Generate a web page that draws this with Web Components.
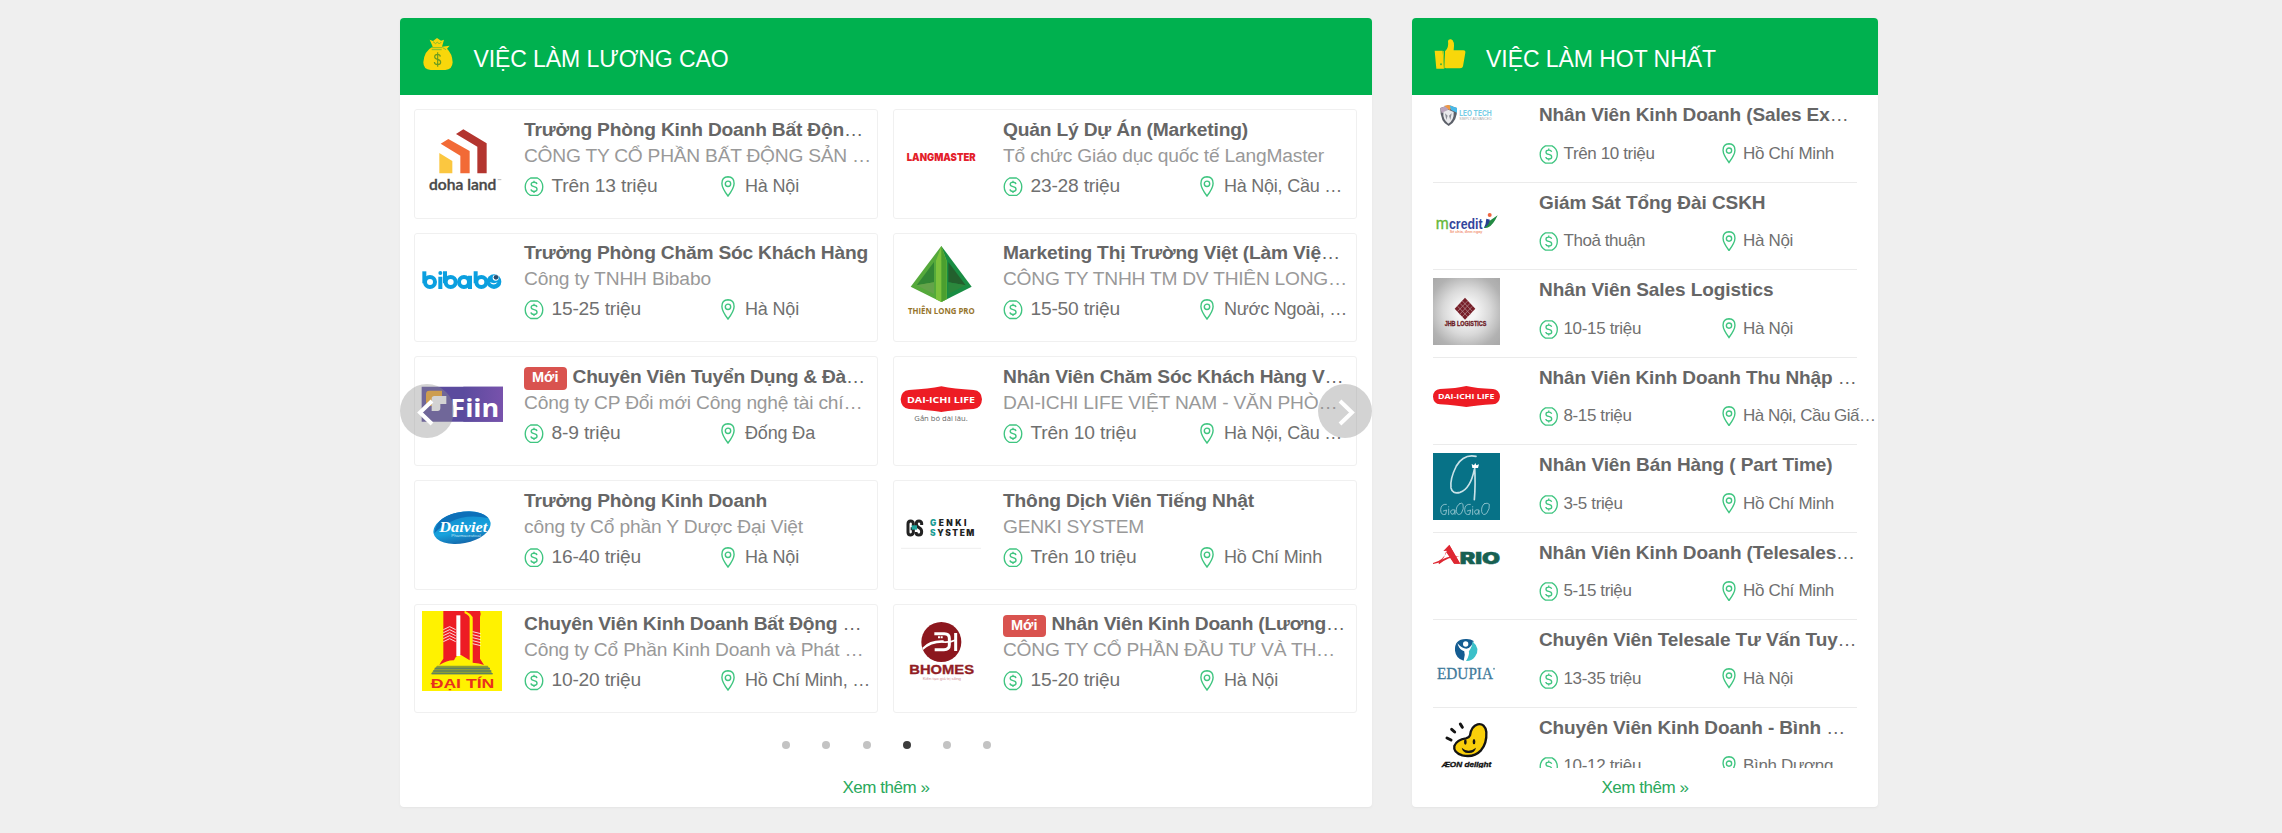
<!DOCTYPE html>
<html lang="vi">
<head>
<meta charset="utf-8">
<title>Việc làm</title>
<style>
html,body{margin:0;background:#efefef;font-family:"Liberation Sans",Arial,sans-serif}
</style>
</head>
<body>
<jobs-page></jobs-page>
<script>
const LOGOS = {
doha:['96 350 240 240','<path fill="#fbc740" d="M148 458l39 24v37h-39z"/><path fill="#f26a36" d="M152 430l23-14 64 36v67h-28v-53z"/><path fill="#b3352f" d="M198 401l22-14 70 42v90h-28v-80z"/><text x="117" y="569" font-family="Lato" font-weight="600" font-size="43" textLength="202" lengthAdjust="spacingAndGlyphs" fill="#484848" stroke="#484848">doha land</text><path d="M323 538h11" stroke="#bbb" stroke-width="3"/>'],
bibabo:['96 723 240 240','<g fill="none" stroke="#0b9fdf" stroke-width="12"><path d="M103 817v36"/><circle cx="120" cy="849" r="15"/><path d="M151 833v37M165 817v36"/><circle cx="182" cy="849" r="15"/><circle cx="222" cy="849" r="15"/><path d="M240 830v40M257 817v36"/><circle cx="274" cy="849" r="15"/></g><circle cx="151" cy="822" r="6" fill="#0b9fdf"/><circle cx="312" cy="848" r="22" fill="#0b9fdf"/><path d="M299 850q12 13 24 0-10 5-24 0z" fill="#fff"/><circle cx="317" cy="836" r="9" fill="#fff"/><circle cx="318" cy="835" r="7" fill="#284f72"/>'],
fiin:['96 58 240 240','<path fill="#5b4b9e" d="M95 126h244v105H95z"/><path fill="url(#fg)" d="M220 126h119v105H220z"/><defs><linearGradient id="fg"><stop stop-color="#5b4b9e"/><stop offset="1" stop-color="#7852ac"/></linearGradient></defs><path fill="#f6a524" d="M118 138h38v30h-20v16h-12q-16 0-16-12v-24q0-10 10-10z"/><path fill="#fff" d="M125 162q0-8 8-8h36v24h-18v12q0 9-8 9h-18z"/><text x="181" y="216" font-family="Open Sans" font-weight="700" font-size="76" textLength="147" lengthAdjust="spacingAndGlyphs" fill="#fff">Fiin</text>'],
daiviet:['96 430 240 240','<defs><linearGradient id="dg" x2="0" y2="1"><stop offset=".1" stop-color="#168fd0"/><stop offset=".6" stop-color="#16a2dd"/><stop offset="1" stop-color="#1469ac"/></linearGradient></defs><ellipse cx="216" cy="549" rx="87" ry="47" transform="rotate(-11 216 549)" fill="url(#dg)"/><path d="M133 566Q139 510 218 501q58-5 77 19-67-13-110 10-36 18-52 36z" fill="#0d70b9"/><text x="148" y="563" font-family="Liberation Serif" font-style="italic" font-weight="700" font-size="45" textLength="144" lengthAdjust="spacingAndGlyphs" fill="#fff">Daiviet</text><text x="184" y="576" font-size="12" textLength="88" lengthAdjust="spacingAndGlyphs" fill="#bfe5f7">Pharmaceutical</text>'],
daitin:['96 800 240 240','<path fill="#fff200" d="M96 800h240v240H96z"/><path fill="#ed1c24" d="M160 800h62l17 14v134l-26-16q-12 0-17 8l-4 8q-20-1-44 14 6-12 12-19z"/><path fill="#ed1c24" d="M226 800h44q4 8 0 18v125l12 19q-14-6-34-7V818q-6-10-22-18z"/><path stroke="#fff" stroke-width="12" d="M205 813v122"/><path d="M224 804q20 10 20 24v122" fill="none" stroke="#fff200" stroke-width="5"/><path d="M160 856l19-9 18 9M160 865l19-9 18 9M160 874l19-9 18 9M160 883l19-9 18 9M160 892l19-9 18 9M248 862l24 6M248 871l24 6M248 880l24 6M248 889l24 6M248 898l24 6" stroke="#fff" fill="none" stroke-width="2.500"/><path d="M141 964h152l15 26H122z" fill="#8d9f35"/><path d="M134 972h166M130 980h174M126 988h182" stroke="#5f8160" stroke-width="4"/><text x="122" y="1031" font-weight="700" font-size="39" textLength="191" lengthAdjust="spacingAndGlyphs" fill="#e8301e">ĐẠI TÍN</text>'],
lang:['62 350 240 240','<text x="79" y="483" font-family="Inter" font-weight="900" font-size="32" textLength="207" lengthAdjust="spacingAndGlyphs" fill="#e3202a">LANGMASTER</text>'],
thien:['62 723 240 240','<path d="M183 741L91 863l92 46z" fill="#55a93b"/><path d="M183 741l91 122-91 46z" fill="#198d43"/><path d="M183 741l-16 44v116l16 8 16-8V785z" fill="#7cc23c"/><path d="M183 741v168l15-8V785z" fill="#4b9f2f"/><path d="M161 789v61l-52 9z" fill="#328634"/><path d="M204 789v61l52 9z" fill="#23602d"/><path d="M109 859l52-9v35z" fill="#64a34a"/><path d="M256 859l-52-9v35z" fill="#2b873c"/><text x="83" y="945" font-family="Open Sans" font-weight="700" font-size="28" textLength="200" lengthAdjust="spacingAndGlyphs" fill="#96742b">THIÊN LONG PRO</text>'],
dai:['62 58 240 240','<path fill="#ed1c24" d="M86 136q60-3 97-11 37 8 97 11 24 2 25 28-1 26-25 29-60 3-97 9-37-6-97-9-24-3-25-29 1-26 25-28z"/><text x="80" y="174" font-family="Open Sans" font-weight="700" font-size="27" textLength="204" lengthAdjust="spacingAndGlyphs" fill="#fff">DAI-ICHI LIFE</text><text x="102" y="228" font-family="Open Sans" font-size="24" textLength="160" lengthAdjust="spacingAndGlyphs" fill="#666">Gắn bó dài lâu.</text>'],
genki:['62 430 240 240','<g fill="none" stroke="#222" stroke-width="9"><path d="M99 544v-8q-1-7-8-7-8 0-8 9v25q0 8 8 8 8-1 8-8v-11h-8"/><path d="M124 541v-5q-1-7-8-7-8 0-8 8 0 8 8 12 8 4 8 12 0 10-9 10-8 0-8-9"/></g><path d="M94 542h16v13H94z" fill="#20a49c"/><g font-family="Inter" font-weight="900" font-size="25"><text x="149" y="545" textLength="109" fill="#222"><tspan fill="#1b9c94">G</tspan>ENKI</text><text x="149" y="573" textLength="133" fill="#222"><tspan fill="#1b9c94">S</tspan>YSTEM</text></g><path d="M62 611h240" stroke="#eee" stroke-width="3"/>'],
bhomes:['62 800 240 240','<circle cx="183" cy="893" r="60" fill="#8c171e"/><path d="M126 910q22-24 64-22v7q-38-1-62 22z" fill="#fff"/><g fill="none" stroke="#fff" stroke-width="9"><path d="M162 868h30q15 0 15 14v20q0 14-16 14h-28M226 866v54"/></g><path d="M186 893q24 2 40-6" stroke="#fff" stroke-width="5" fill="none"/><path d="M173 876h6v6h-6zM181 876h6v6h-6z" fill="#fff"/><text x="87" y="990" font-weight="700" font-size="36" textLength="194" lengthAdjust="spacingAndGlyphs" fill="#911d25" stroke="#911d25">BHOMES</text><text x="127" y="1006" font-size="11" textLength="115" lengthAdjust="spacingAndGlyphs" fill="#cf8d8f">Kiến tạo giá trị sống</text>'],
leo:['98 309 201 201','<path d="M120 324l24-8 26 8q2 40-25 54-26-12-25-54z" fill="#5c6069"/><path d="M120 324l24-8v14l-20 10z" fill="#b9a3bb"/><path d="M132 317l12-2 14 4-10 12z" fill="#f09842"/><path d="M148 316l22 8v14l-18-8z" fill="#47b9e9"/><path d="M129 336l15-7 16 7q2 24-16 35-17-12-15-35z" fill="#e9e9ec"/><path d="M134 340l8 7-4 13zM154 340l-8 7 4 13z" fill="#8c8f97"/><text x="177" y="347" font-family="Inter" font-weight="700" font-size="22" textLength="97" lengthAdjust="spacingAndGlyphs" fill="#74cce5">LEO TECH</text><text x="177" y="360" font-size="10" textLength="97" lengthAdjust="spacingAndGlyphs" fill="#aaa">SIMPLY ADVANCED</text>'],
mcredit:['98 571 201 201','<text x="106" y="684" textLength="39" lengthAdjust="spacingAndGlyphs" fill="#66b738" stroke="#66b738" font-size="50">m</text><text x="146" y="684" textLength="101" lengthAdjust="spacingAndGlyphs" fill="#32459c" font-weight="700" font-size="42">credit</text><path d="M266 662l26-18q-14 30-28 36-6 3-14 1 12-8 16-19z" fill="#238a42"/><path d="M251 681q14-6 18-24l-11-3q-1 16-7 27z" fill="#27408f"/><circle cx="268" cy="643" r="6" fill="#ef6541"/><text x="148" y="698" font-size="13" font-weight="700" textLength="98" lengthAdjust="spacingAndGlyphs" fill="#f29579">Sẻ chia, đem ngay</text>'],
jhb:['98 832 201 201','<defs><radialGradient id="jg" r=".7"><stop offset=".2" stop-color="#f5f5f5"/><stop offset=".5" stop-color="#d9d9d9"/><stop offset=".8" stop-color="#b2b2b2"/><stop offset="1" stop-color="#a9a9a9"/></radialGradient></defs><path d="M98 832h201v201H98z" fill="url(#jg)"/><path d="M194 891l31 33-31 33-31-33z" fill="#77202a"/><path d="M179 908l31 33M172 917l31 32M186 901l31 32M209 908l-31 33M216 917l-31 32M202 901l-31 32" stroke="#b9979a" stroke-width="2"/><text x="133" y="976" font-weight="700" font-size="19" textLength="125" lengthAdjust="spacingAndGlyphs" fill="#6e1d27" stroke="#6e1d27">JHB LOGISTICS</text>'],
dai2:['98 49 201 201','<path fill="#ed1c24" d="M119 118q50-2 79-9 30 7 80 9 19 2 21 23-2 21-21 23-50 3-80 8-30-5-79-8-20-2-21-23 1-21 21-23z"/><text x="113" y="149" font-family="Open Sans" font-weight="700" font-size="22" textLength="169" lengthAdjust="spacingAndGlyphs" fill="#fff">DAI-ICHI LIFE</text>'],
giao:['98 309 201 201','<path d="M98 309h201v201H98z" fill="#077287"/><g fill="none" stroke="#c9e2e8" stroke-width="5" stroke-linecap="round"><path d="M227 319q-37-8-59 29-20 40-16 66 4 19 27 13 31-10 43-69M223 350q3 54-1 99" /><g stroke-width="2.5" stroke="#9fcbd5"><path d="M138 463q-16-2-17 16 0 18 15 14l3-13-10 3M145 477v17M145 470v1M163 480q-13-3-12 7 2 10 10 4l3-10v12M178 461q-12 8-10 24 4 14 15 5 9-14 5-27-3-6-10-2"/><path d="M210 463q-16-2-17 16 0 18 15 14l3-13-10 3M217 477v17M217 470v1M235 480q-13-3-12 7 2 10 10 4l3-10v12M252 461q-10 8-8 24 4 14 15 5 10-14 8-27-5-6-15-2"/></g></g><path d="M214 342l7 4 4-7 3 7 8-3-3 11h-17z" fill="#fff"/>'],
ario:['98 571 201 201','<path d="M98 637q31-7 43-37l-12 1 18-19 33 57h-19l-24-36q-8 34-39 37z" fill="#de2832"/><path d="M114 634q28-21 64-17-36 2-62 24z" fill="#de2832"/><path d="M147 583l32 56h-17l-24-38z" fill="#de2832"/><text x="178" y="641" font-family="Inter" font-weight="900" font-size="47" textLength="121" lengthAdjust="spacingAndGlyphs" fill="#176052" stroke="#176052" stroke-width="1.500">RIO</text>'],
edupia:['98 832 201 201','<path d="M196 865q-34 0-32 35 3 24 26 30 5-17 3-30-15-3-22-22 14 16 27 16 17-2 22-23-10-7-24-6z" fill="#145c91"/><path d="M216 872q26 22 8 46-11 14-27 13 12-17 8-33 12-9 11-26z" fill="#3bc0c9"/><circle cx="196" cy="880" r="8" fill="#fff"/><path d="M173 881q10 16 25 15 11-2 17-16-4 19-12 23 2 16-9 27 2-16-2-28-15-4-19-21z" fill="#fff"/><text x="110" y="985" font-family="Liberation Serif" font-size="48" textLength="168" lengthAdjust="spacingAndGlyphs" fill="#417b9b" stroke="#417b9b" stroke-width=".8">EDUPIA</text><circle cx="281" cy="954" r="3" fill="#6c9cb2"/>'],
aeon:['98 78 201 201','<path d="M209 136q4-28 23-33 22-4 26 23 2 34-16 55-22 23-56 15-28-9-24-28 8-20 35-23 10-3 12-9z" fill="#f9cf0a" stroke="#141414" stroke-width="7"/><ellipse cx="195" cy="156" rx="4" ry="8" fill="#141414"/><ellipse cx="221" cy="155" rx="4" ry="8" fill="#141414"/><path d="M184 173q20 18 43 0-4 18-24 16-16-1-19-16z" fill="#141414"/><path d="M180 102l6 10M154 118l9 8M140 144l12 6" stroke="#141414" stroke-width="9" stroke-linecap="round"/><text x="124" y="231" font-weight="700" font-style="italic" font-size="22" textLength="149" lengthAdjust="spacingAndGlyphs" fill="#111" stroke="#111">ÆON delight</text>']
};
const ICONS = {
money:['0 0 20 20','<g fill="none" stroke="#3fc580" stroke-width="1.4"><path d="M6.500 1h7q5.500 3 5.500 9t-5.500 9h-7Q1 16 1 10t5.500-9z" stroke-linejoin="round"/><path d="M13 7.3Q12.6 5.4 10 5.4 7.1 5.4 7.1 7.5 7.1 9.4 10 9.9q3.1.5 3.1 2.6 0 2.2-3.1 2.2-2.8 0-3.1-2.1M10 3.800v1.600M10 14.700v1.600"/></g>'],
pin:['0 0 14 21','<g fill="none" stroke="#3fc580" stroke-width="1.4"><path d="M7 20Q.9 11.8.9 7.4.9 1 7 .8q6.1.2 6.1 6.6Q13.1 11.800 7 20z"/><circle cx="7" cy="7.800" r="2.7"/></g>'],
bag:['100 114 88 96','<path fill="#f8d70b" d="M119 119l10 4 12-9 12 8 9-3-6 21 23-3-8 9q16 15 17 41-1 22-22 23h-44q-22-1-22-23 2-34 28-47l-2-5z"/><path d="M125 143h32M125 149h30M158 143l10 6M129 125l8 6 5-5 6 6 6-6" stroke="#7fbf2c" stroke-width="3" fill="none"/><path d="M151 170q-1-7-8-7-9 0-9 7 0 6 9 8 9 2 9 9 0 7-9 7-9 0-10-8M143 157v43" fill="none" stroke="#6a9c20" stroke-width="3.500"/>'],
thumb:['100 118 96 90','<path fill="#f8d70b" d="M102 153h24l4 54h-23zM133 155q12-10 9-31 1-6 9-5 12 3 8 33h29q7 0 6 7l-7 41q-1 6-9 6h-42q-4 0-4-7z"/><path d="M128 154l3 52" stroke="#b5c81c" stroke-width="3"/><circle cx="121" cy="194" r="3" fill="#4bb03a"/>']
};
const define = (name, cls) => customElements.define(name, cls);
class Base extends HTMLElement {
  constructor(){ super(); this.attachShadow({mode:'open'}); }
  a(n){ return this.getAttribute(n) || ''; }
}
const svg = ([box, body]) => `<svg viewBox="${box}" xmlns="http://www.w3.org/2000/svg">${body}</svg>`;

/* a single line whose tracking is set so that it takes a given width */
define('fit-text', class extends Base {
  connectedCallback(){
    const t = this.a('text'), cut = t.endsWith('…');
    this.shadowRoot.innerHTML = `<style>:host{display:block;white-space:pre;flex:none;overflow:visible}i{font-style:normal;font-weight:400}</style><span>${(cut ? t.slice(0,-1) : t).replace('&','&amp;')}${cut ? '<i>…</i>' : ''}</span>`;
    const s = this.shadowRoot.querySelector('span'), w = parseFloat(this.a('w'));
    if (w) s.style.letterSpacing = ((w + 1 - s.getBoundingClientRect().width) / t.length).toFixed(3) + 'px';
  }
});
define('ui-icon', class extends Base {
  connectedCallback(){ this.shadowRoot.innerHTML = `<style>:host{display:block;flex:none}svg{display:block;width:100%;height:100%}</style>` + svg(ICONS[this.a('name')]); }
});
define('company-logo', class extends Base {
  connectedCallback(){ this.shadowRoot.innerHTML = `<style>:host{display:block;flex:none}svg{display:block;width:100%;height:100%;overflow:visible;font-family:"Liberation Sans",sans-serif}</style>` + svg(LOGOS[this.a('name')]); }
});
define('job-card', class extends Base {
  connectedCallback(){
    const [tw,cw,sw,lw] = this.a('fit').split(',');
    this.shadowRoot.innerHTML = `<style>
:host{display:flex;box-sizing:border-box;height:109.5px;border:1px solid #f0f0f0;border-radius:3px;padding:6.5px 0 0 6.5px;background:#fff}
company-logo{width:80px;height:80px}
.b{margin-left:22.500px;margin-top:.1px;flex:1;min-width:0;font-size:19.200px;line-height:26px;color:#707070}
.t{display:flex;height:26px;font-weight:700;color:#666}
.c{color:#999;height:26px}
.m{display:flex;margin-top:4px;height:26px}
.m ui-icon{margin-top:4px;width:20px;height:19.500px}
.s{width:176.500px;margin-left:7.500px}
.m ui-icon.p{width:14px;height:21px;margin-top:3px;margin-left:-7px}
.l{margin-left:10px;font-size:18px}
.n{box-sizing:border-box;width:43px;height:22.500px;margin:3.500px 5.500px 0 0;border-radius:4px;background:#d9534f;color:#fff;font-size:14.500px;line-height:21px;padding-left:8px}
</style><company-logo name="${this.a('logo')}"></company-logo><div class="b">
<div class="t">${this.hasAttribute('new') ? '<fit-text class="n" text="Mới" w="25.500"></fit-text>' : ''}<fit-text text="${this.a('job').replace('&','&amp;')}" w="${tw}"></fit-text></div>
<fit-text class="c" text="${this.a('company')}" w="${cw}"></fit-text>
<div class="m"><ui-icon name="money"></ui-icon><fit-text class="s" text="${this.a('pay')}" w="${sw}"></fit-text><ui-icon class="p" name="pin"></ui-icon><fit-text class="l" text="${this.a('place')}" w="${lw}"></fit-text></div></div>`;
  }
});
define('hot-job', class extends Base {
  connectedCallback(){
    const [tw,sw,lw] = this.a('fit').split(',');
    this.shadowRoot.innerHTML = `<style>
:host{display:flex;box-sizing:border-box;height:87.500px;border-bottom:1px solid #ebebeb;padding-top:8px;flex:none}
company-logo{width:67px;height:67px}
.b{margin-left:39px;margin-top:-.8px;flex:1;min-width:0;font-size:19px;line-height:26px;color:#707070}
.t{height:26px;font-weight:700;color:#666}
.m{display:flex;margin-top:12.500px;height:26px;font-size:17px}
.m ui-icon{width:19.500px;height:19px;margin-top:3.800px}
.s{width:158.500px;margin-left:5px}
.m ui-icon.p{width:14px;height:20.500px;margin-top:2.500px}
.l{margin-left:7px}
</style><company-logo name="${this.a('logo')}"></company-logo><div class="b">
<fit-text class="t" text="${this.a('job')}" w="${tw}"></fit-text>
<div class="m"><ui-icon name="money"></ui-icon><fit-text class="s" text="${this.a('pay')}" w="${sw}"></fit-text><ui-icon class="p" name="pin"></ui-icon><fit-text class="l" text="${this.a('place')}" w="${lw}"></fit-text></div></div>`;
  }
});
define('job-panel', class extends Base {
  connectedCallback(){
    this.shadowRoot.innerHTML = `<style>
:host{display:flex;flex-direction:column;box-sizing:border-box;height:789px;background:#fff;border-radius:4px;overflow:hidden;box-shadow:0 1px 2px #e4e4e4}
header{display:flex;flex:none;height:77px;background:#00b14f;color:#fff;font-size:23px;line-height:77px;padding-left:23px}
ui-icon{width:30px;height:32px;margin-top:20px}
:host([icon=thumb]) ui-icon{width:32px;margin-left:-1.500px}
header fit-text{margin-left:20.500px;padding-top:3px}
main{flex:1;min-height:0}
footer{flex:none;height:39px;display:flex;justify-content:center;font-size:17px;line-height:39px;color:#2aa95c}
</style><header><ui-icon name="${this.a('icon')}"></ui-icon><fit-text text="${this.a('heading')}" w="${this.a('w')}"></fit-text></header><main><slot></slot></main><footer><fit-text text="Xem thêm »" w="86"></fit-text></footer>`;
  }
});
define('page-dots', class extends Base {
  connectedCallback(){
    this.shadowRoot.innerHTML = `<style>:host{display:flex;justify-content:center;gap:32.300px;padding:28px 0 0 1.500px}i{width:8px;height:8px;border-radius:50%;background:#c3c3c3}i.on{background:#3c3c3c}</style>` + [0,1,2,3,4,5].map(i => `<i class="${i===3?'on':''}"></i>`).join('');
  }
});
define('slide-arrow', class extends Base {
  connectedCallback(){
    this.shadowRoot.innerHTML = `<style>:host{display:block;width:54px;height:54px;border-radius:50%;background:rgba(145,145,145,.4)}svg{display:block;width:54px;height:54px}</style><svg viewBox="0 0 54 54"><path d="${this.a('dir')==='prev'?'M32 17L20 28.500 32 40':'M22 17L34 28.500 22 40'}" fill="none" stroke="#fff" stroke-width="4"/></svg>`;
  }
});
define('jobs-page', class extends Base {
  connectedCallback(){
    const cards = [
['doha','Trưởng Phòng Kinh Doanh Bất Độn…','CÔNG TY CỔ PHẦN BẤT ĐỘNG SẢN …','Trên 13 triệu','Hà Nội','338,346,105,53'],
['lang','Quản Lý Dự Án (Marketing)','Tổ chức Giáo dục quốc tế LangMaster','23-28 triệu','Hà Nội, Cầu …','244,320,88.5,117'],
['bibabo','Trưởng Phòng Chăm Sóc Khách Hàng','Công ty TNHH Bibabo','15-25 triệu','Hà Nội','343,186,88.5,53'],
['thien','Marketing Thị Trường Việt (Làm Việ…','CÔNG TY TNHH TM DV THIÊN LONG…','15-50 triệu','Nước Ngoài, …','336,343,88.5,122'],
['fiin','Chuyên Viên Tuyển Dụng & Đà…','Công ty CP Đổi mới Công nghệ tài chí…','8-9 triệu','Đống Đa','291.5,337.5,68,69',1],
['dai','Nhân Viên Chăm Sóc Khách Hàng V…','DAI-ICHI LIFE VIỆT NAM - VĂN PHÒ…','Trên 10 triệu','Hà Nội, Cầu …','339.5,333.5,105,117'],
['daiviet','Trưởng Phòng Kinh Doanh','công ty Cổ phần Y Dược Đại Việt','16-40 triệu','Hà Nội','242,278,88.5,53'],
['genki','Thông Dịch Viên Tiếng Nhật','GENKI SYSTEM','Trên 10 triệu','Hồ Chí Minh','250,140,105,97'],
['daitin','Chuyên Viên Kinh Doanh Bất Động …','Công ty Cổ Phần Kinh Doanh và Phát …','10-20 triệu','Hồ Chí Minh, …','336.5,338.5,88.5,124'],
['bhomes','Nhân Viên Kinh Doanh (Lương…','CÔNG TY CỔ PHẦN ĐẦU TƯ VÀ TH…','15-20 triệu','Hà Nội','292.5,331,88.5,53',1]];
    const hot = [
['leo','Nhân Viên Kinh Doanh (Sales Ex…','Trên 10 triệu','Hồ Chí Minh','308.500,90,90'],
['mcredit','Giám Sát Tổng Đài CSKH','Thoả thuận','Hà Nội','225.500,80.500,49'],
['jhb','Nhân Viên Sales Logistics','10-15 triệu','Hà Nội','233.500,76.500,49'],
['dai2','Nhân Viên Kinh Doanh Thu Nhập …','8-15 triệu','Hà Nội, Cầu Giấ…','316.500,67,131.500'],
['giao','Nhân Viên Bán Hàng ( Part Time)','3-5 triệu','Hồ Chí Minh','292.500,58,90'],
['ario','Nhân Viên Kinh Doanh (Telesales…','5-15 triệu','Hồ Chí Minh','315,67,90'],
['edupia','Chuyên Viên Telesale Tư Vấn Tuy…','13-35 triệu','Hà Nội','316.500,76.500,49'],
['aeon','Chuyên Viên Kinh Doanh - Bình …','10-12 triệu','Bình Dương','305,76.500,89']];
    this.shadowRoot.innerHTML = `<style>
:host{display:flex;box-sizing:border-box;width:2282px;height:833px;padding:18px 0 0 400px;gap:40px;background:#efefef;overflow:hidden}
.high{width:972px}.top{width:466px}
.stage{position:relative;padding:14px 15px 0 14px}
.grid{display:grid;grid-template-columns:464px 464px;column-gap:15px;row-gap:14.200px}
slide-arrow{position:absolute;top:289px}
.prev{left:0}.next{right:0}
.list{display:flex;flex-direction:column;height:672.500px;overflow:hidden;padding:0 21px 0 21px}
</style>
<job-panel class="high" icon="bag" heading="VIỆC LÀM LƯƠNG CAO" w="254"><div class="stage"><div class="grid">${cards.map(c => `<job-card logo="${c[0]}" job="${c[1].replace('&','&amp;')}" company="${c[2]}" pay="${c[3]}" place="${c[4]}" fit="${c[5]}"${c[6]?' new':''}></job-card>`).join('')}</div><slide-arrow class="prev" dir="prev"></slide-arrow><slide-arrow class="next" dir="next"></slide-arrow></div><page-dots></page-dots></job-panel>
<job-panel class="top" icon="thumb" heading="VIỆC LÀM HOT NHẤT" w="229"><div class="list">${hot.map(c => `<hot-job logo="${c[0]}" job="${c[1]}" pay="${c[2]}" place="${c[3]}" fit="${c[4]}"></hot-job>`).join('')}</div></job-panel>`;
  }
});
</script>
</body>
</html>
